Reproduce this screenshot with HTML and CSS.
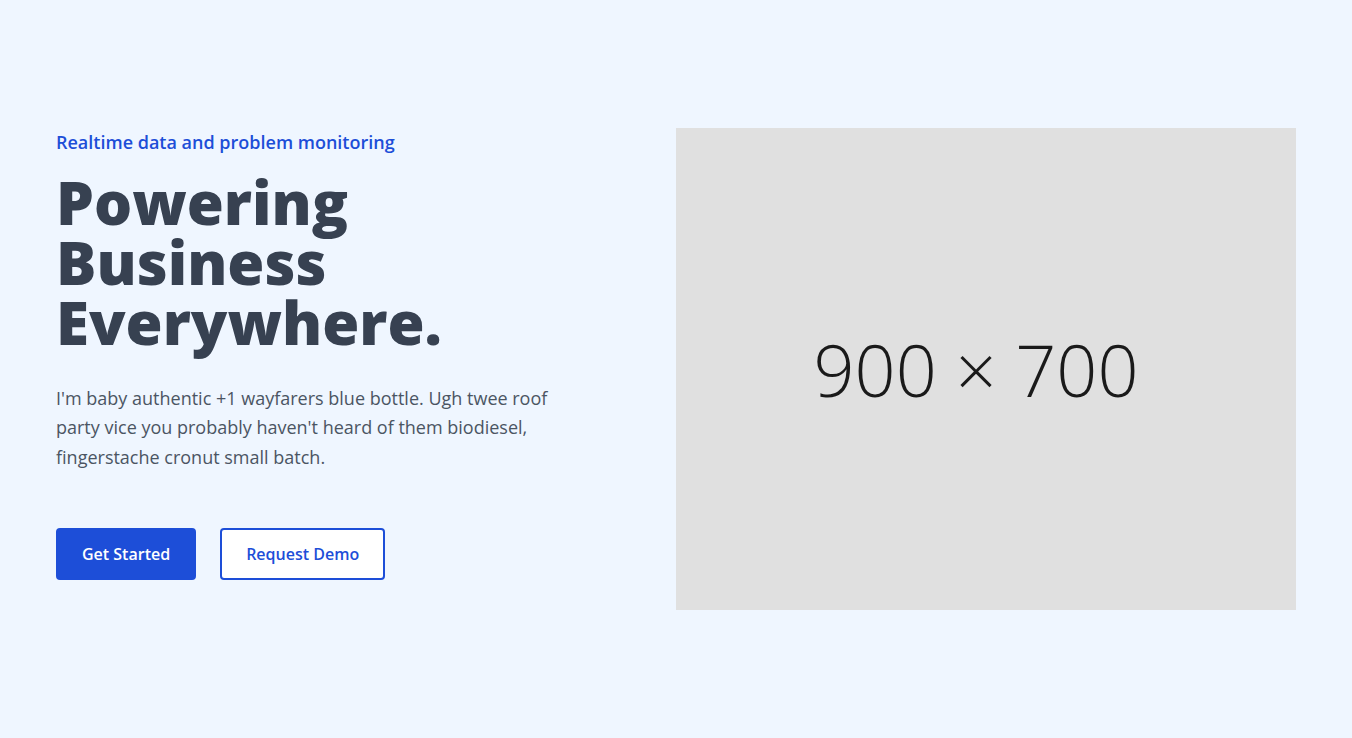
FILE: index.html
```html
<!DOCTYPE html>
<html lang="en">
<head>
<meta charset="utf-8">
<title>Powering Business Everywhere</title>
<link rel="stylesheet" href="styles.css">
</head>
<body>
<section class="hero">
  <div class="hero-text">
    <p class="tagline">Realtime data and problem monitoring</p>
    <h1 class="title">Powering<br>Business<br>Everywhere.</h1>
    <p class="lead">I'm baby authentic +1 wayfarers blue bottle. Ugh twee roof party vice you probably haven't heard of them biodiesel, fingerstache cronut small batch.</p>
    <div class="actions">
      <a class="btn btn-primary" href="#">Get Started</a>
      <a class="btn btn-outline" href="#">Request Demo</a>
    </div>
  </div>
  <div class="hero-media">
    <div class="placeholder"><span>900 × 700</span></div>
  </div>
</section>
</body>
</html>
```
FILE: styles.css
```css
* { box-sizing: border-box; }
html, body { margin: 0; padding: 0; }
body {
  background: #eff6ff;
  font-family: "Open Sans", "Noto Sans", sans-serif;
  color: #374151;
}
.hero {
  display: grid;
  grid-template-columns: 1fr 1fr;
  padding: 128px 56px;
  min-height: 738px;
  align-items: start;
}
.hero-text { display: flex; flex-direction: column; align-items: flex-start; }
.tagline {
  margin: 0 0 16px;
  font-size: 18px;
  line-height: 28px;
  font-weight: 600;
  color: #1d4ed8;
}
.title {
  margin: 0 0 32px;
  font-size: 60px;
  line-height: 60px;
  font-weight: 800;
  color: #374151;
}
.lead {
  margin: 0 0 56px;
  max-width: 500px;
  font-size: 18px;
  line-height: 29.25px;
  color: #4b5563;
}
.actions { display: flex; gap: 24px; }
.btn {
  display: inline-block;
  height: 52px;
  padding: 0 24px;
  border-radius: 4px;
  border: 2px solid #1d4ed8;
  font-size: 16px;
  line-height: 48px;
  font-weight: 600;
  text-decoration: none;
}
.btn-primary { background: #1d4ed8; color: #fff; }
.btn-outline { background: #fff; color: #1d4ed8; }
.hero-media { display: flex; }
.placeholder {
  width: 100%;
  aspect-ratio: 900 / 700;
  background: #e0e0e0;
  display: flex;
  align-items: center;
  justify-content: center;
  padding-right: 20px;
}
.placeholder span {
  font-size: 72px;
  font-weight: 300;
  color: #1a1a1a;
}
```
